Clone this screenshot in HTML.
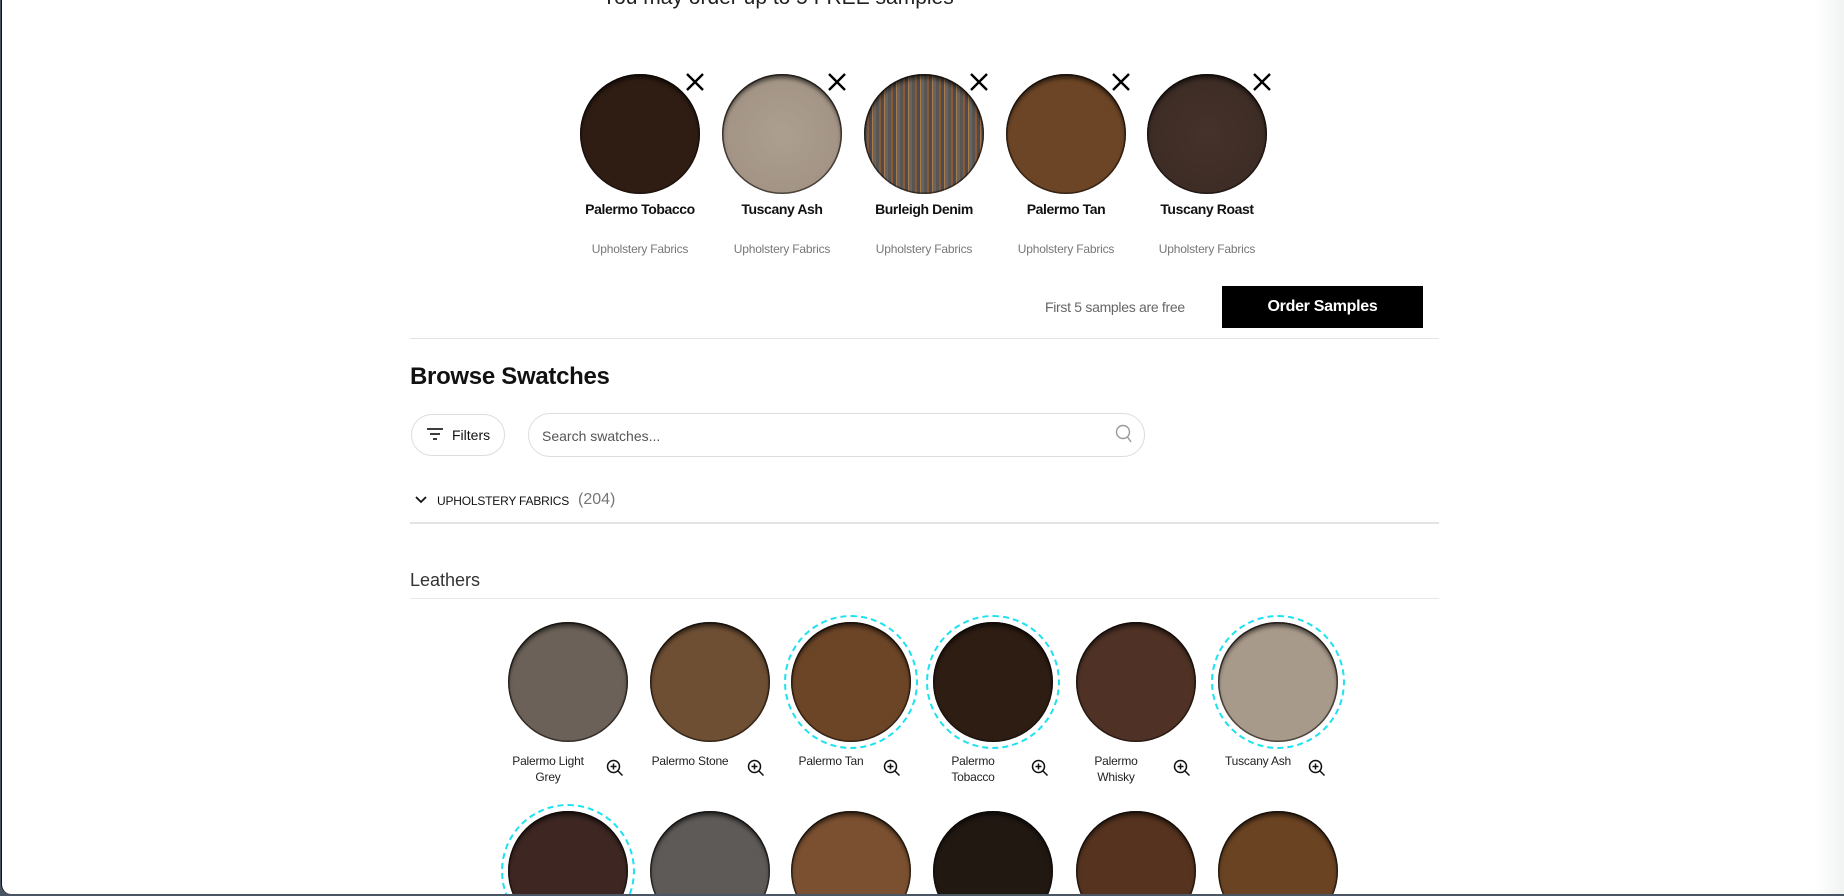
<!DOCTYPE html>
<html><head><meta charset="utf-8"><style>
*{margin:0;padding:0;box-sizing:border-box}
body{width:1844px;height:896px;overflow:hidden;background:#4a5563;font-family:"Liberation Sans",sans-serif;position:relative}
.page{position:absolute;left:1px;top:-10px;width:1843px;height:904px;background:#fff;border-left:1px solid #111;border-bottom-left-radius:10px;overflow:hidden}
.a{position:absolute}
.c{position:absolute;border-radius:50%;box-shadow:inset 0 4px 4px rgba(0,0,0,.6),inset 0 0 0 1.5px rgba(20,15,12,.6)}
.x{position:absolute;width:20px;height:20px}
.nm{position:absolute;width:150px;text-align:center;font-size:14px;color:#111;font-weight:bold;letter-spacing:-0.4px}
.sb{position:absolute;width:150px;text-align:center;font-size:12px;color:#777;letter-spacing:-0.2px}
.ring{position:absolute;width:134px;height:134px;border:2px dashed #1de2f0;border-radius:50%}
.lb{position:absolute;width:110px;text-align:center;font-size:12px;color:#222;line-height:16px;letter-spacing:-0.2px}
.zm{position:absolute;width:18px;height:18px}
</style></head><body>
<div class="page">
<div class="a" style="left:600px;top:-4px;font-size:21px;color:#222">You may order up to 5 FREE samples</div>

<div class="c" style="left:578px;top:84px;width:120px;height:120px;background:#2f1d13"></div>
<div class="c" style="left:720px;top:84px;width:120px;height:120px;background:radial-gradient(#ad9f90,#9e8f80)"></div>
<div class="c" style="left:862px;top:84px;width:120px;height:120px;background:repeating-linear-gradient(90deg,#5a5550 0 3px,#8a5a36 3px 5px,#4a4c52 5px 8px,#a77a50 8px 9px,#6a6460 9px 12px)"></div>
<div class="c" style="left:1004px;top:84px;width:120px;height:120px;background:#6c4526"></div>
<div class="c" style="left:1145px;top:84px;width:120px;height:120px;background:radial-gradient(#45322a,#3a2a23)"></div>

<svg class="x" style="left:683px;top:82px" viewBox="0 0 20 20"><path d="M2 2L18 18M18 2L2 18" stroke="#000" stroke-width="2.4"/></svg>
<svg class="x" style="left:825px;top:82px" viewBox="0 0 20 20"><path d="M2 2L18 18M18 2L2 18" stroke="#000" stroke-width="2.4"/></svg>
<svg class="x" style="left:967px;top:82px" viewBox="0 0 20 20"><path d="M2 2L18 18M18 2L2 18" stroke="#000" stroke-width="2.4"/></svg>
<svg class="x" style="left:1109px;top:82px" viewBox="0 0 20 20"><path d="M2 2L18 18M18 2L2 18" stroke="#000" stroke-width="2.4"/></svg>
<svg class="x" style="left:1250px;top:82px" viewBox="0 0 20 20"><path d="M2 2L18 18M18 2L2 18" stroke="#000" stroke-width="2.4"/></svg>

<div class="nm" style="left:563px;top:211px">Palermo Tobacco</div>
<div class="nm" style="left:705px;top:211px">Tuscany Ash</div>
<div class="nm" style="left:847px;top:211px">Burleigh Denim</div>
<div class="nm" style="left:989px;top:211px">Palermo Tan</div>
<div class="nm" style="left:1130px;top:211px">Tuscany Roast</div>
<div class="sb" style="left:563px;top:252px">Upholstery Fabrics</div>
<div class="sb" style="left:705px;top:252px">Upholstery Fabrics</div>
<div class="sb" style="left:847px;top:252px">Upholstery Fabrics</div>
<div class="sb" style="left:989px;top:252px">Upholstery Fabrics</div>
<div class="sb" style="left:1130px;top:252px">Upholstery Fabrics</div>

<div class="a" style="left:1043px;top:309px;font-size:14px;color:#666;letter-spacing:-0.3px">First 5 samples are free</div>
<div class="a" style="left:1220px;top:296px;width:201px;height:42px;background:#000;color:#fff;font-size:16px;font-weight:bold;text-align:center;line-height:42px;letter-spacing:-0.3px">Order Samples</div>
<div class="a" style="left:408px;top:348px;width:1029px;height:1px;background:#e4e4e4"></div>

<div class="a" style="left:408px;top:373px;font-size:24px;font-weight:bold;color:#111;letter-spacing:-0.3px">Browse Swatches</div>

<div class="a" style="left:409px;top:424px;width:94px;height:42px;border:1px solid #ddd;border-radius:21px"></div>
<svg class="a" style="left:424px;top:436px" width="18" height="16" viewBox="0 0 18 16"><path d="M1 3H17M4 8H14M7 13H11" stroke="#222" stroke-width="1.8"/></svg>
<div class="a" style="left:450px;top:437px;font-size:14px;color:#111">Filters</div>
<div class="a" style="left:526px;top:423px;width:617px;height:44px;border:1px solid #ddd;border-radius:22px"></div>
<div class="a" style="left:540px;top:438px;font-size:14px;color:#555">Search swatches...</div>
<svg class="a" style="left:1113px;top:434px" width="18" height="20" viewBox="0 0 18 20"><circle cx="8" cy="8" r="6.5" fill="none" stroke="#999" stroke-width="1.4"/><path d="M12.5 13L16 18" stroke="#999" stroke-width="1.4"/></svg>

<svg class="a" style="left:413px;top:505px" width="12" height="10" viewBox="0 0 12 10"><path d="M1 2L6 7L11 2" fill="none" stroke="#111" stroke-width="1.8"/></svg>
<div class="a" style="left:435px;top:504px;font-size:12px;color:#111;letter-spacing:-0.2px">UPHOLSTERY FABRICS</div>
<div class="a" style="left:576px;top:501px;font-size:16px;color:#777">(204)</div>
<div class="a" style="left:408px;top:532px;width:1029px;height:2px;background:#e4e4e4"></div>

<div class="a" style="left:408px;top:580px;font-size:18px;color:#333">Leathers</div>
<div class="a" style="left:408px;top:608px;width:1029px;height:1px;background:#e8e8e8"></div>

<div class="c" style="left:506px;top:632px;width:120px;height:120px;background:#6b6158"></div>
<div class="c" style="left:648px;top:632px;width:120px;height:120px;background:#6e4f34"></div>
<div class="c" style="left:789px;top:632px;width:120px;height:120px;background:#6c4527"></div>
<div class="c" style="left:931px;top:632px;width:120px;height:120px;background:#2e1d13"></div>
<div class="c" style="left:1074px;top:632px;width:120px;height:120px;background:#4f3225"></div>
<div class="c" style="left:1216px;top:632px;width:120px;height:120px;background:#a89a8a"></div>
<div class="ring" style="left:782px;top:625px"></div>
<div class="ring" style="left:924px;top:625px"></div>
<div class="ring" style="left:1209px;top:625px"></div>

<div class="lb" style="left:491px;top:763px">Palermo Light<br>Grey</div>
<div class="lb" style="left:633px;top:763px">Palermo Stone</div>
<div class="lb" style="left:774px;top:763px">Palermo Tan</div>
<div class="lb" style="left:916px;top:763px">Palermo<br>Tobacco</div>
<div class="lb" style="left:1059px;top:763px">Palermo<br>Whisky</div>
<div class="lb" style="left:1201px;top:763px">Tuscany Ash</div>

<svg class="zm" style="left:604px;top:769px" viewBox="0 0 18 18"><circle cx="7.5" cy="7.5" r="6" fill="none" stroke="#111" stroke-width="1.5"/><path d="M7.5 4.5V10.5M4.5 7.5H10.5M12 12L16.5 16.5" stroke="#111" stroke-width="1.5"/></svg>
<svg class="zm" style="left:745px;top:769px" viewBox="0 0 18 18"><circle cx="7.5" cy="7.5" r="6" fill="none" stroke="#111" stroke-width="1.5"/><path d="M7.5 4.5V10.5M4.5 7.5H10.5M12 12L16.5 16.5" stroke="#111" stroke-width="1.5"/></svg>
<svg class="zm" style="left:881px;top:769px" viewBox="0 0 18 18"><circle cx="7.5" cy="7.5" r="6" fill="none" stroke="#111" stroke-width="1.5"/><path d="M7.5 4.5V10.5M4.5 7.5H10.5M12 12L16.5 16.5" stroke="#111" stroke-width="1.5"/></svg>
<svg class="zm" style="left:1029px;top:769px" viewBox="0 0 18 18"><circle cx="7.5" cy="7.5" r="6" fill="none" stroke="#111" stroke-width="1.5"/><path d="M7.5 4.5V10.5M4.5 7.5H10.5M12 12L16.5 16.5" stroke="#111" stroke-width="1.5"/></svg>
<svg class="zm" style="left:1171px;top:769px" viewBox="0 0 18 18"><circle cx="7.5" cy="7.5" r="6" fill="none" stroke="#111" stroke-width="1.5"/><path d="M7.5 4.5V10.5M4.5 7.5H10.5M12 12L16.5 16.5" stroke="#111" stroke-width="1.5"/></svg>
<svg class="zm" style="left:1306px;top:769px" viewBox="0 0 18 18"><circle cx="7.5" cy="7.5" r="6" fill="none" stroke="#111" stroke-width="1.5"/><path d="M7.5 4.5V10.5M4.5 7.5H10.5M12 12L16.5 16.5" stroke="#111" stroke-width="1.5"/></svg>

<div class="c" style="left:506px;top:821px;width:120px;height:120px;background:#3e2722"></div>
<div class="c" style="left:648px;top:821px;width:120px;height:120px;background:#5d5a57"></div>
<div class="c" style="left:789px;top:821px;width:120px;height:120px;background:#7a5030"></div>
<div class="c" style="left:931px;top:821px;width:120px;height:120px;background:#211812"></div>
<div class="c" style="left:1074px;top:821px;width:120px;height:120px;background:#55331f"></div>
<div class="c" style="left:1216px;top:821px;width:120px;height:120px;background:#6a4322"></div>
<div class="ring" style="left:499px;top:814px"></div>

<div class="a" style="right:0;top:0;width:30px;height:904px;background:linear-gradient(90deg,#fff,#f7f8f8 60%,#f1f3f3)"></div>
</div>
</body></html>
